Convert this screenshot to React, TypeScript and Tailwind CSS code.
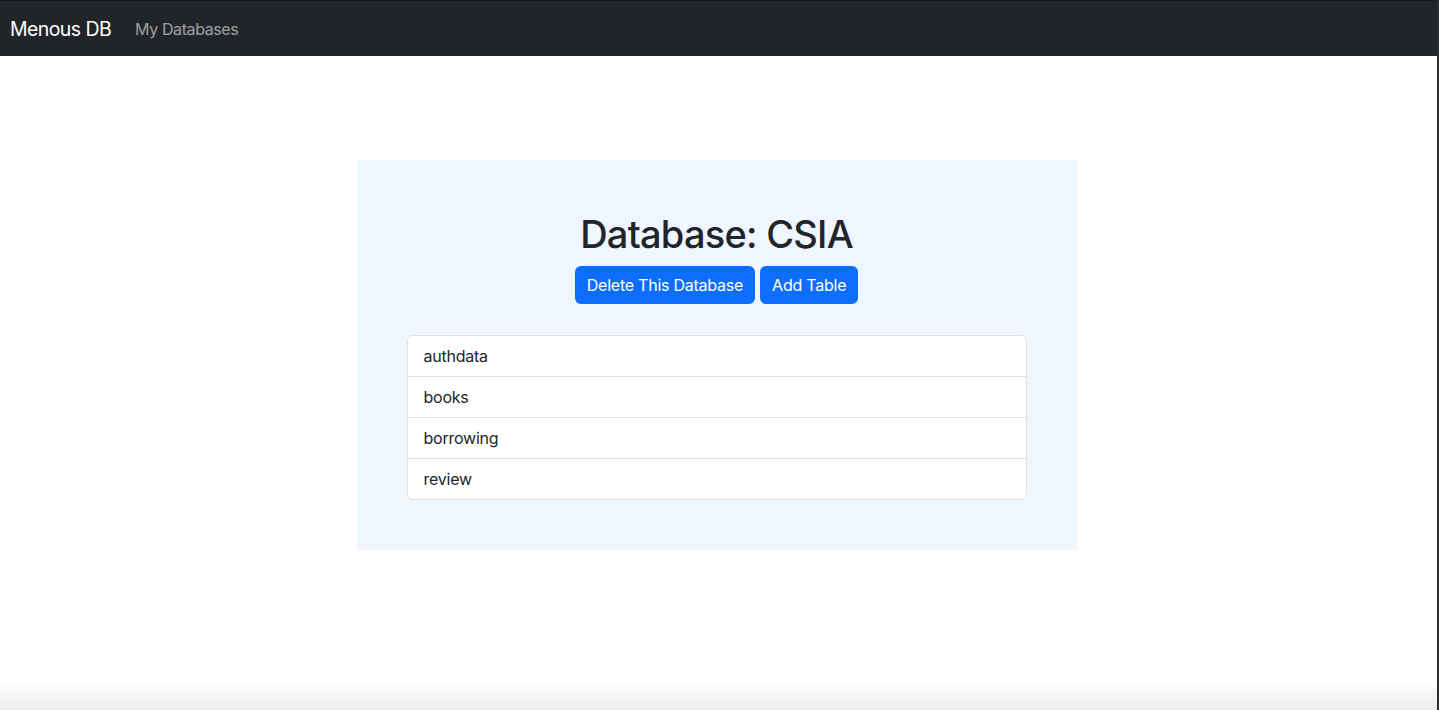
const TABLES = ["authdata", "books", "borrowing", "review"];

export default function App() {
  return (
    <div
      className="flex h-[710px] w-[1439px] flex-col overflow-hidden border-r-2 border-[#2a2d31] bg-white text-[#212529]"
      style={{ fontFamily: "Inter, 'Liberation Sans', sans-serif" }}
    >
      <nav className="flex h-[56px] shrink-0 items-center border-t border-[#16181b] bg-[#212529] px-[10px]">
        <span className="mr-4 text-[19.5px] leading-[30px] tracking-[-0.03em] text-white">Menous DB</span>
        <a className="px-2 text-[16px] leading-6 tracking-[-0.025em] text-white/55">My Databases</a>
      </nav>

      <main className="flex flex-1 justify-center pr-[4px] pt-[104px]">
        <section className="flex h-fit w-[720px] flex-col items-center bg-[#eff6ff] p-[50px]">
          <h1 className="mb-2 text-[38px] font-medium leading-[48px] tracking-[-0.02em]">Database: CSIA</h1>
          <div className="flex gap-[5px]">
            <button className="h-[38px] rounded-md bg-[#0d6efd] px-3 text-[16px] tracking-[-0.015em] text-white">
              Delete This Database
            </button>
            <button className="h-[38px] rounded-md bg-[#0d6efd] px-3 text-[16px] tracking-[-0.015em] text-white">
              Add Table
            </button>
          </div>
          <ul className="mt-[31px] w-full overflow-hidden rounded-md border border-[#dee2e6] bg-white">
            {TABLES.map((t, i) => (
              <li
                key={t}
                className={"px-4 py-2 text-[16px] leading-6 tracking-[-0.015em] " + (i > 0 ? "border-t border-[#dee2e6]" : "")}
              >
                {t}
              </li>
            ))}
          </ul>
        </section>
      </main>

      <div className="h-[30px] shrink-0 bg-gradient-to-b from-white to-[#ececec]" />
    </div>
  );
}
